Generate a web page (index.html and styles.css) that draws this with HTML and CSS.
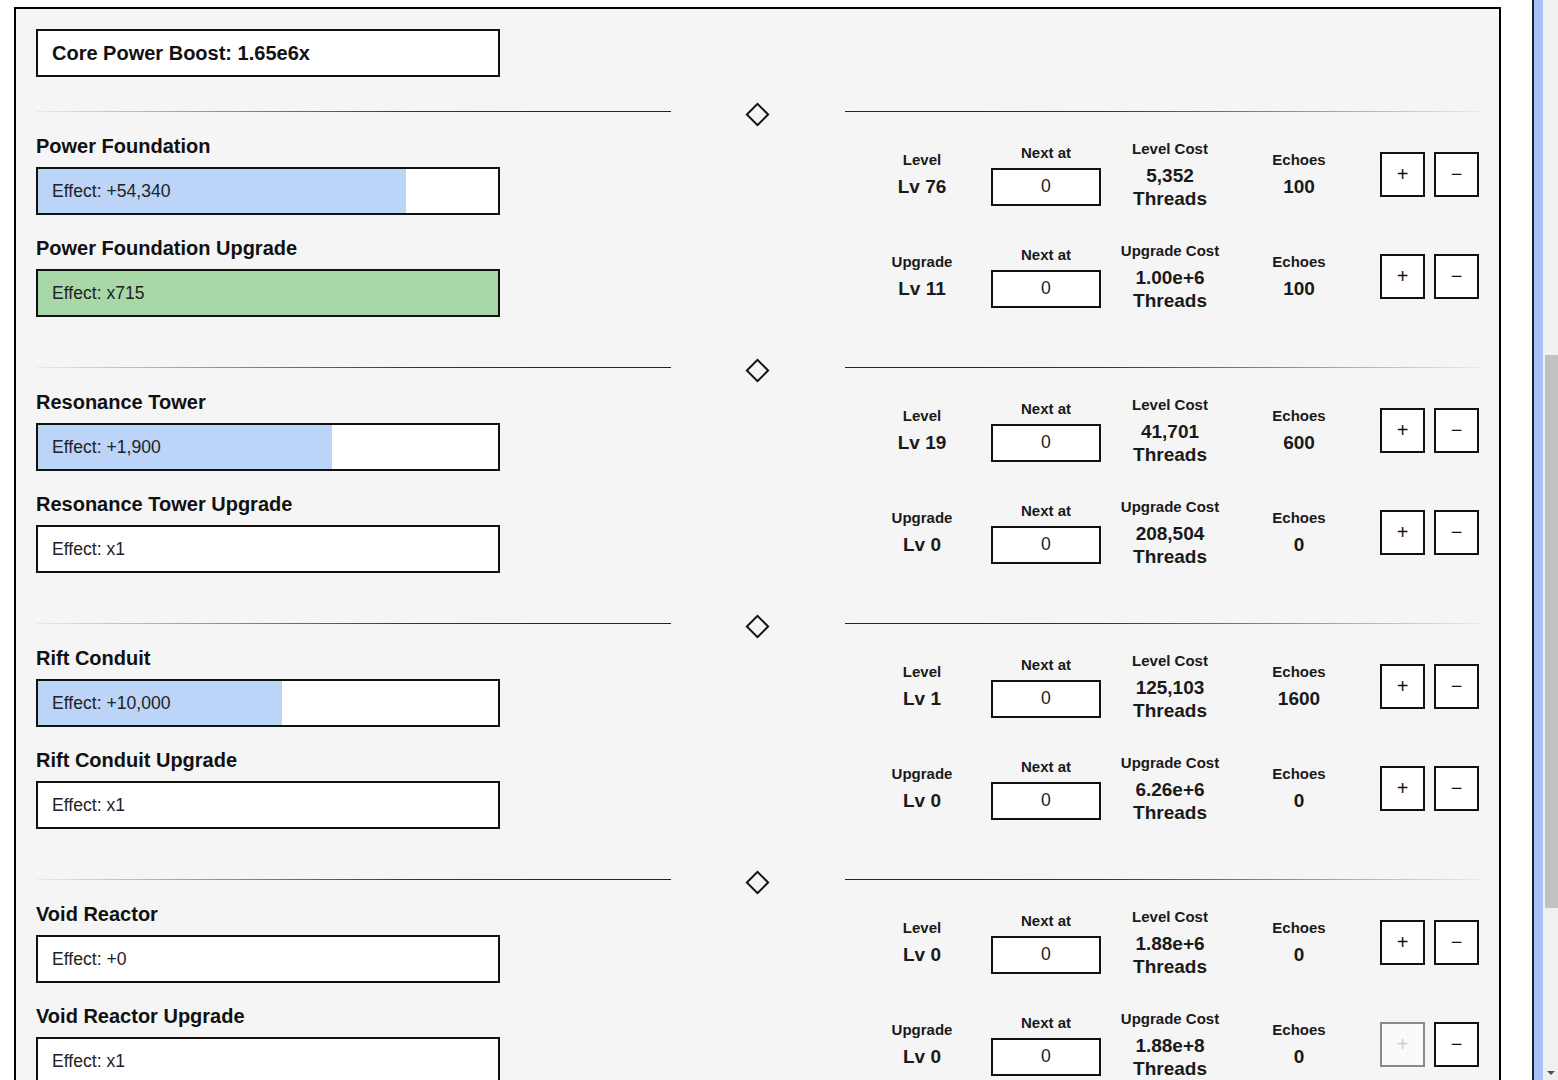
FILE: index.html
```html
<!DOCTYPE html>
<html lang="en">
<head>
<meta charset="utf-8">
<title>Core Power</title>
<link rel="stylesheet" href="styles.css">
</head>
<body>
<div class="page">
  <div class="panel">
    <div class="boost">Core Power Boost: 1.65e6x</div>

    <section class="block">
      <div class="divider"><span class="line left"></span><span class="gem"><span class="diamond"></span></span><span class="line right"></span></div>
      <div class="row">
        <div class="info">
          <div class="title">Power Foundation</div>
          <div class="bar blue" style="--fill:80%">Effect: +54,340</div>
        </div>
        <div class="stats">
          <div class="stat"><div class="lbl">Level</div><div class="val">Lv 76</div></div>
          <div class="stat"><div class="lbl">Next at</div><input class="next" type="text" value="0"></div>
          <div class="stat"><div class="lbl">Level Cost</div><div class="val">5,352<br>Threads</div></div>
          <div class="stat"><div class="lbl">Echoes</div><div class="val">100</div></div>
          <div class="btns"><button class="btn">+</button><button class="btn">&minus;</button></div>
        </div>
      </div>
      <div class="row">
        <div class="info">
          <div class="title">Power Foundation Upgrade</div>
          <div class="bar green" style="--fill:100%">Effect: x715</div>
        </div>
        <div class="stats">
          <div class="stat"><div class="lbl">Upgrade</div><div class="val">Lv 11</div></div>
          <div class="stat"><div class="lbl">Next at</div><input class="next" type="text" value="0"></div>
          <div class="stat"><div class="lbl">Upgrade Cost</div><div class="val">1.00e+6<br>Threads</div></div>
          <div class="stat"><div class="lbl">Echoes</div><div class="val">100</div></div>
          <div class="btns"><button class="btn">+</button><button class="btn">&minus;</button></div>
        </div>
      </div>
    </section>

    <section class="block">
      <div class="divider"><span class="line left"></span><span class="gem"><span class="diamond"></span></span><span class="line right"></span></div>
      <div class="row">
        <div class="info">
          <div class="title">Resonance Tower</div>
          <div class="bar blue" style="--fill:64%">Effect: +1,900</div>
        </div>
        <div class="stats">
          <div class="stat"><div class="lbl">Level</div><div class="val">Lv 19</div></div>
          <div class="stat"><div class="lbl">Next at</div><input class="next" type="text" value="0"></div>
          <div class="stat"><div class="lbl">Level Cost</div><div class="val">41,701<br>Threads</div></div>
          <div class="stat"><div class="lbl">Echoes</div><div class="val">600</div></div>
          <div class="btns"><button class="btn">+</button><button class="btn">&minus;</button></div>
        </div>
      </div>
      <div class="row">
        <div class="info">
          <div class="title">Resonance Tower Upgrade</div>
          <div class="bar blue" style="--fill:0%">Effect: x1</div>
        </div>
        <div class="stats">
          <div class="stat"><div class="lbl">Upgrade</div><div class="val">Lv 0</div></div>
          <div class="stat"><div class="lbl">Next at</div><input class="next" type="text" value="0"></div>
          <div class="stat"><div class="lbl">Upgrade Cost</div><div class="val">208,504<br>Threads</div></div>
          <div class="stat"><div class="lbl">Echoes</div><div class="val">0</div></div>
          <div class="btns"><button class="btn">+</button><button class="btn">&minus;</button></div>
        </div>
      </div>
    </section>

    <section class="block">
      <div class="divider"><span class="line left"></span><span class="gem"><span class="diamond"></span></span><span class="line right"></span></div>
      <div class="row">
        <div class="info">
          <div class="title">Rift Conduit</div>
          <div class="bar blue" style="--fill:53%">Effect: +10,000</div>
        </div>
        <div class="stats">
          <div class="stat"><div class="lbl">Level</div><div class="val">Lv 1</div></div>
          <div class="stat"><div class="lbl">Next at</div><input class="next" type="text" value="0"></div>
          <div class="stat"><div class="lbl">Level Cost</div><div class="val">125,103<br>Threads</div></div>
          <div class="stat"><div class="lbl">Echoes</div><div class="val">1600</div></div>
          <div class="btns"><button class="btn">+</button><button class="btn">&minus;</button></div>
        </div>
      </div>
      <div class="row">
        <div class="info">
          <div class="title">Rift Conduit Upgrade</div>
          <div class="bar blue" style="--fill:0%">Effect: x1</div>
        </div>
        <div class="stats">
          <div class="stat"><div class="lbl">Upgrade</div><div class="val">Lv 0</div></div>
          <div class="stat"><div class="lbl">Next at</div><input class="next" type="text" value="0"></div>
          <div class="stat"><div class="lbl">Upgrade Cost</div><div class="val">6.26e+6<br>Threads</div></div>
          <div class="stat"><div class="lbl">Echoes</div><div class="val">0</div></div>
          <div class="btns"><button class="btn">+</button><button class="btn">&minus;</button></div>
        </div>
      </div>
    </section>

    <section class="block">
      <div class="divider"><span class="line left"></span><span class="gem"><span class="diamond"></span></span><span class="line right"></span></div>
      <div class="row">
        <div class="info">
          <div class="title">Void Reactor</div>
          <div class="bar blue" style="--fill:0%">Effect: +0</div>
        </div>
        <div class="stats">
          <div class="stat"><div class="lbl">Level</div><div class="val">Lv 0</div></div>
          <div class="stat"><div class="lbl">Next at</div><input class="next" type="text" value="0"></div>
          <div class="stat"><div class="lbl">Level Cost</div><div class="val">1.88e+6<br>Threads</div></div>
          <div class="stat"><div class="lbl">Echoes</div><div class="val">0</div></div>
          <div class="btns"><button class="btn">+</button><button class="btn">&minus;</button></div>
        </div>
      </div>
      <div class="row">
        <div class="info">
          <div class="title">Void Reactor Upgrade</div>
          <div class="bar blue" style="--fill:0%">Effect: x1</div>
        </div>
        <div class="stats">
          <div class="stat"><div class="lbl">Upgrade</div><div class="val">Lv 0</div></div>
          <div class="stat"><div class="lbl">Next at</div><input class="next" type="text" value="0"></div>
          <div class="stat"><div class="lbl">Upgrade Cost</div><div class="val">1.88e+8<br>Threads</div></div>
          <div class="stat"><div class="lbl">Echoes</div><div class="val">0</div></div>
          <div class="btns"><button class="btn" disabled>+</button><button class="btn">&minus;</button></div>
        </div>
      </div>
    </section>
  </div>
</div>
<div class="rail"></div>
<div class="scrollbar">
  <div class="track-top"></div>
  <div class="thumb"></div>
  <div class="track-rest"></div>
  <div class="arrow-box"><span class="arrow"></span></div>
</div>
</body>
</html>
```

FILE: styles.css
```css
* { box-sizing: border-box; }

html, body {
  margin: 0;
  height: 100%;
}

body {
  display: flex;
  height: 1080px;
  overflow: hidden;
  background: #ffffff;
  font-family: "Liberation Sans", Arial, sans-serif;
  color: #111;
}

.page {
  width: 1532px;
  flex: none;
  padding: 7px 0 0 14px;
  overflow: hidden;
}

.panel {
  width: 1487px;
  min-height: 1200px;
  background: #f5f5f5;
  border: 2px solid #000;
  border-bottom: none;
  padding: 20px 20px 0 20px;
}

.boost {
  width: 464px;
  height: 48px;
  border: 2px solid #111;
  background: #fff;
  padding-left: 14px;
  display: flex;
  align-items: center;
  font-size: 20px;
  font-weight: bold;
  margin-bottom: 25px;
}

.block {
  margin-bottom: 41px;
}

.divider {
  display: flex;
  align-items: flex-start;
  height: 24px;
  margin-bottom: 8px;
}

.line {
  flex: 1;
  height: 1px;
  margin-top: 9px;
}

.line.left {
  background: linear-gradient(to right, rgba(40,40,40,0.05), #333 60%, #222);
}

.line.right {
  background: linear-gradient(to right, #222, #333 40%, rgba(40,40,40,0.05));
}

.gem {
  width: 174px;
  height: 24px;
  display: flex;
  align-items: center;
  justify-content: center;
}

.diamond {
  width: 17px;
  height: 17px;
  border: 2px solid #111;
  transform: rotate(45deg);
}

.row {
  display: grid;
  grid-template-columns: 464px 1fr 617px;
  align-items: center;
  margin-bottom: 21px;
}

.row:last-child {
  margin-bottom: 0;
}

.info {
  grid-column: 1;
}

.title {
  font-size: 20px;
  font-weight: bold;
  line-height: 24px;
  margin-bottom: 9px;
}

.bar {
  height: 48px;
  border: 2px solid #111;
  padding-left: 14px;
  display: flex;
  align-items: center;
  font-size: 17.6px;
  color: #222;
}

.bar.blue {
  background: linear-gradient(to right, #bcd4f8 var(--fill), #fff var(--fill));
}

.bar.green {
  background: linear-gradient(to right, #a8d8a8 var(--fill), #fff var(--fill));
}

.stats {
  grid-column: 3;
  display: grid;
  grid-template-columns: 120px 128px 120px 138px 111px;
  align-items: center;
  justify-items: center;
}

.stat {
  display: flex;
  flex-direction: column;
  align-items: center;
  gap: 6px;
  text-align: center;
}

.lbl {
  font-size: 15px;
  font-weight: bold;
  line-height: 18px;
  color: #1a1a1a;
}

.val {
  font-size: 19px;
  font-weight: bold;
  line-height: 23px;
  color: #1a1a1a;
}

.next {
  width: 110px;
  height: 38px;
  border: 2px solid #111;
  background: #fff;
  text-align: center;
  font-family: "Liberation Sans", Arial, sans-serif;
  font-size: 17.6px;
  color: #222;
  padding: 0;
  margin: 0;
}

.btns {
  justify-self: end;
  display: flex;
  gap: 9px;
}

.btn {
  width: 45px;
  height: 45px;
  border: 2px solid #111;
  background: #fff;
  color: #111;
  font-family: "Liberation Sans", Arial, sans-serif;
  font-size: 20px;
  padding: 0;
  display: flex;
  align-items: center;
  justify-content: center;
}

.btn:disabled {
  border-color: #8a8a8a;
  color: #cfcfcf;
  background: #fafafa;
}

.rail {
  width: 11px;
  flex: none;
  border-left: 2px solid #1c2133;
  background: #a7c2f6;
}

.scrollbar {
  width: 15px;
  flex: none;
  background: #f0f0f0;
  display: flex;
  flex-direction: column;
}

.track-top {
  height: 355px;
  flex: none;
}

.thumb {
  height: 553px;
  flex: none;
  margin-left: 2px;
  background: #c1c1c1;
}

.track-rest {
  flex: 1;
}

.arrow-box {
  height: 14px;
  display: flex;
  align-items: center;
  justify-content: center;
}

.arrow {
  width: 0;
  height: 0;
  border-left: 4px solid transparent;
  border-right: 4px solid transparent;
  border-top: 4px solid #505050;
}
```
